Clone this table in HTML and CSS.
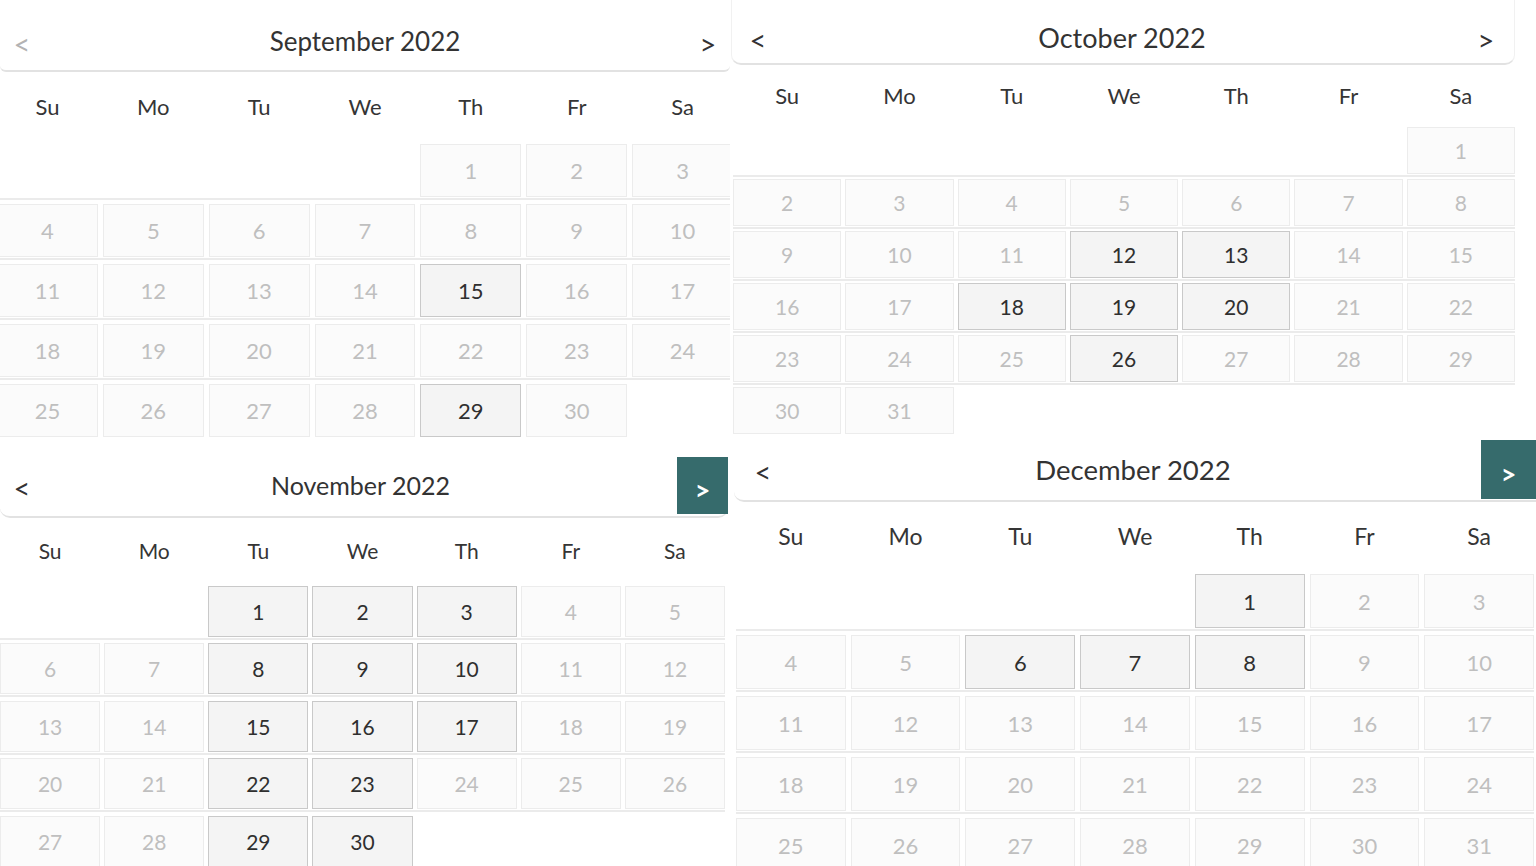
FILE: index.html
```html
<!DOCTYPE html>
<html lang="en">
<head>
<meta charset="utf-8">
<title>Calendars 2022</title>
<link rel="stylesheet" href="styles.css">
</head>
<body>
<main class="board">

  <section class="cal cal-sep">
    <header class="cal-head">
      <span class="nav nav-prev is-disabled">&lt;</span>
      <h2 class="title">September 2022</h2>
      <span class="nav nav-next">&gt;</span>
    </header>
    <div class="week-days"><span>Su</span><span>Mo</span><span>Tu</span><span>We</span><span>Th</span><span>Fr</span><span>Sa</span></div>
    <div class="weeks">
      <div class="week"><span class="blank"></span><span class="blank"></span><span class="blank"></span><span class="blank"></span><span class="day">1</span><span class="day">2</span><span class="day">3</span></div>
      <div class="week"><span class="day">4</span><span class="day">5</span><span class="day">6</span><span class="day">7</span><span class="day">8</span><span class="day">9</span><span class="day">10</span></div>
      <div class="week"><span class="day">11</span><span class="day">12</span><span class="day">13</span><span class="day">14</span><span class="day on">15</span><span class="day">16</span><span class="day">17</span></div>
      <div class="week"><span class="day">18</span><span class="day">19</span><span class="day">20</span><span class="day">21</span><span class="day">22</span><span class="day">23</span><span class="day">24</span></div>
      <div class="week"><span class="day">25</span><span class="day">26</span><span class="day">27</span><span class="day">28</span><span class="day on">29</span><span class="day">30</span><span class="blank"></span></div>
    </div>
  </section>

  <section class="cal cal-oct">
    <header class="cal-head">
      <span class="nav nav-prev">&lt;</span>
      <h2 class="title">October 2022</h2>
      <span class="nav nav-next">&gt;</span>
    </header>
    <div class="week-days"><span>Su</span><span>Mo</span><span>Tu</span><span>We</span><span>Th</span><span>Fr</span><span>Sa</span></div>
    <div class="weeks">
      <div class="week"><span class="blank"></span><span class="blank"></span><span class="blank"></span><span class="blank"></span><span class="blank"></span><span class="blank"></span><span class="day">1</span></div>
      <div class="week"><span class="day">2</span><span class="day">3</span><span class="day">4</span><span class="day">5</span><span class="day">6</span><span class="day">7</span><span class="day">8</span></div>
      <div class="week"><span class="day">9</span><span class="day">10</span><span class="day">11</span><span class="day on">12</span><span class="day on">13</span><span class="day">14</span><span class="day">15</span></div>
      <div class="week"><span class="day">16</span><span class="day">17</span><span class="day on">18</span><span class="day on">19</span><span class="day on">20</span><span class="day">21</span><span class="day">22</span></div>
      <div class="week"><span class="day">23</span><span class="day">24</span><span class="day">25</span><span class="day on">26</span><span class="day">27</span><span class="day">28</span><span class="day">29</span></div>
      <div class="week"><span class="day">30</span><span class="day">31</span><span class="blank"></span><span class="blank"></span><span class="blank"></span><span class="blank"></span><span class="blank"></span></div>
    </div>
  </section>

  <section class="cal cal-nov">
    <header class="cal-head">
      <span class="nav nav-prev">&lt;</span>
      <h2 class="title">November 2022</h2>
      <span class="nav nav-next nav-btn">&gt;</span>
    </header>
    <div class="week-days"><span>Su</span><span>Mo</span><span>Tu</span><span>We</span><span>Th</span><span>Fr</span><span>Sa</span></div>
    <div class="weeks">
      <div class="week"><span class="blank"></span><span class="blank"></span><span class="day on">1</span><span class="day on">2</span><span class="day on">3</span><span class="day">4</span><span class="day">5</span></div>
      <div class="week"><span class="day">6</span><span class="day">7</span><span class="day on">8</span><span class="day on">9</span><span class="day on">10</span><span class="day">11</span><span class="day">12</span></div>
      <div class="week"><span class="day">13</span><span class="day">14</span><span class="day on">15</span><span class="day on">16</span><span class="day on">17</span><span class="day">18</span><span class="day">19</span></div>
      <div class="week"><span class="day">20</span><span class="day">21</span><span class="day on">22</span><span class="day on">23</span><span class="day">24</span><span class="day">25</span><span class="day">26</span></div>
      <div class="week"><span class="day">27</span><span class="day">28</span><span class="day on">29</span><span class="day on">30</span><span class="blank"></span><span class="blank"></span><span class="blank"></span></div>
    </div>
  </section>

  <section class="cal cal-dec">
    <header class="cal-head">
      <span class="nav nav-prev">&lt;</span>
      <h2 class="title">December 2022</h2>
      <span class="nav nav-next nav-btn">&gt;</span>
    </header>
    <div class="week-days"><span>Su</span><span>Mo</span><span>Tu</span><span>We</span><span>Th</span><span>Fr</span><span>Sa</span></div>
    <div class="weeks">
      <div class="week"><span class="blank"></span><span class="blank"></span><span class="blank"></span><span class="blank"></span><span class="day on">1</span><span class="day">2</span><span class="day">3</span></div>
      <div class="week"><span class="day">4</span><span class="day">5</span><span class="day on">6</span><span class="day on">7</span><span class="day on">8</span><span class="day">9</span><span class="day">10</span></div>
      <div class="week"><span class="day">11</span><span class="day">12</span><span class="day">13</span><span class="day">14</span><span class="day">15</span><span class="day">16</span><span class="day">17</span></div>
      <div class="week"><span class="day">18</span><span class="day">19</span><span class="day">20</span><span class="day">21</span><span class="day">22</span><span class="day">23</span><span class="day">24</span></div>
      <div class="week"><span class="day">25</span><span class="day">26</span><span class="day">27</span><span class="day">28</span><span class="day">29</span><span class="day">30</span><span class="day">31</span></div>
    </div>
  </section>

</main>
</body>
</html>
```

FILE: styles.css
```css
* { box-sizing: border-box; }

html, body {
  margin: 0;
  padding: 0;
  background: #ffffff;
}

body {
  font-family: Lato, "Open Sans", "Liberation Sans", sans-serif;
  color: #333333;
}

.board {
  display: grid;
  grid-template-columns: 730px 806px;
  grid-template-rows: 440px 426px;
  width: 1536px;
  height: 866px;
  overflow: hidden;
}

.cal {
  overflow: hidden;
  display: flex;
  flex-direction: column;
  min-width: 0;
}

/* ---------- header ---------- */
.cal-head {
  display: flex;
  align-items: center;
  border-bottom: 2px solid #e2e2e2;
  border-radius: 0 0 10px 10px;
  flex: none;
}

.title {
  flex: 1;
  margin: 0;
  text-align: center;
  font-weight: 400;
  color: #333333;
  line-height: 1;
}

.nav {
  width: 44px;
  flex: none;
  text-align: center;
  font-size: 29px;
  line-height: 1;
  color: #333333;
  padding-top: 4px;
}

.nav.is-disabled { color: #b3b3b3; }

.nav-btn {
  align-self: stretch;
  display: flex;
  align-items: center;
  justify-content: center;
  background: #366b6c;
  color: #ffffff;
  font-weight: 700;
  font-size: 27px;
  padding-top: 8px;
}

/* ---------- weekdays ---------- */
.week-days {
  display: grid;
  grid-template-columns: repeat(7, 1fr);
  align-items: center;
  text-align: center;
  color: #353535;
  flex: none;
}

/* ---------- weeks ---------- */
.week {
  display: grid;
  grid-template-columns: repeat(7, 1fr);
  padding-bottom: 1px;
  border-bottom: 2px solid #ebebeb;
}
.week:last-child { border-bottom: 0; }

.day {
  display: flex;
  align-items: center;
  justify-content: center;
  background: #fbfbfb;
  border: 1px solid #ececec;
  color: #bfbfbf;
}

.day.on {
  background: #f4f4f4;
  border-color: #c9c9c9;
  color: #2f2f2f;
}

/* ---------- September ---------- */
.cal-sep .cal-head { height: 72px; padding-top: 12px; border-radius: 0 0 6px 6px; }
.cal-sep .title { font-size: 26px; }
.cal-sep .week-days { height: 68px; margin-left: -3px; width: 736px; column-gap: 5px; font-size: 22px; }
.cal-sep .weeks { margin-left: -3px; width: 736px; }
.cal-sep .week { column-gap: 5px; padding-top: 4px; }
.cal-sep .day { height: 53px; font-size: 22px; }

/* ---------- October ---------- */
.cal-oct { padding-left: 1px; padding-right: 21px; }
.cal-oct .cal-head {
  height: 65px;
  padding: 12px 6px 0 4px;
  border-left: 1px solid #f1f1f1;
  border-right: 1px solid #f1f1f1;
}
.cal-oct .title { font-size: 27px; }
.cal-oct .week-days { height: 60px; margin-left: 2px; width: 782px; column-gap: 4px; font-size: 22px; }
.cal-oct .weeks { margin-left: 2px; width: 782px; }
.cal-oct .week { column-gap: 4px; padding-top: 2px; }
.cal-oct .day { height: 47px; font-size: 21px; }

/* ---------- November ---------- */
.cal-nov .cal-head { height: 78px; padding: 17px 0 2px 0; margin-right: 2px; }
.cal-nov .title { font-size: 25px; }
.cal-nov .nav-btn { width: 51px; }
.cal-nov .week-days { height: 64px; width: 725px; column-gap: 4px; font-size: 21px; }
.cal-nov .weeks { width: 725px; }
.cal-nov .week { column-gap: 4px; padding-top: 3.5px; }
.cal-nov .day { height: 51px; font-size: 21px; }

/* ---------- December ---------- */
.cal-dec .cal-head { height: 62px; padding: 0 0 1px 7px; margin-left: 4px; border-radius: 0 0 0 10px; }
.cal-dec .title { font-size: 27.5px; }
.cal-dec .nav-btn { width: 55px; }
.cal-dec .week-days { height: 68px; margin-left: 6px; width: 798px; column-gap: 5px; font-size: 23px; }
.cal-dec .weeks { margin-left: 6px; width: 798px; }
.cal-dec .week { column-gap: 5px; padding-top: 4px; }
.cal-dec .day { height: 54px; font-size: 22px; }
```
